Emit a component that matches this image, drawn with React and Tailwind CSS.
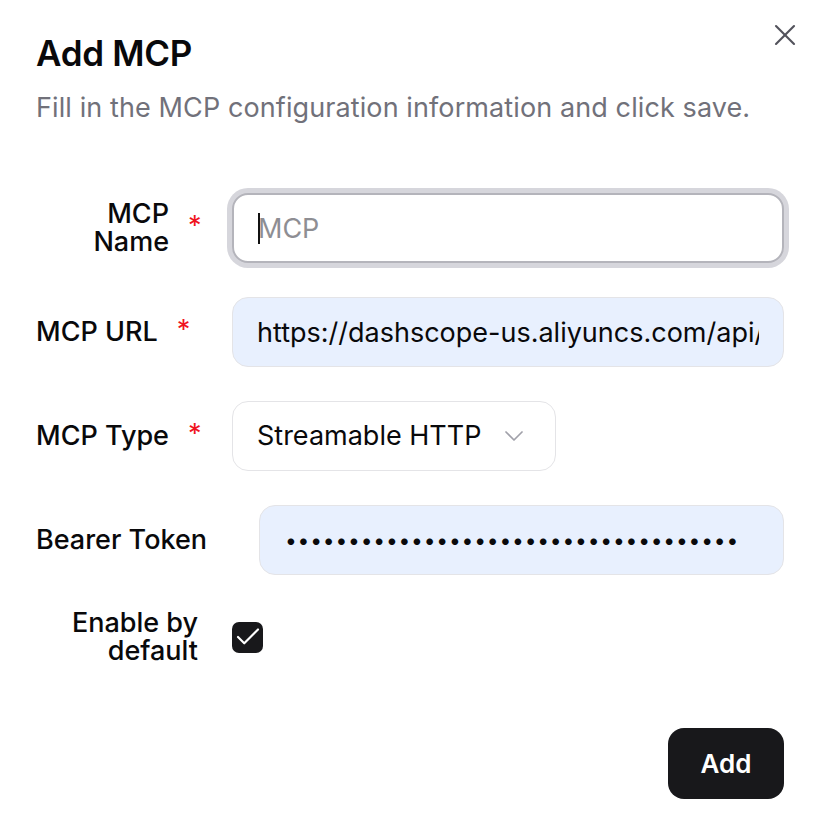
import React from "react";
import { X, Check, ChevronDown } from "lucide-react";

// red required marker next to a label
const Required = () => (
  <span className="ml-[19px] text-[27px] leading-none text-[#f0131e] -translate-y-[3px]">*</span>
);

const FormRow = ({ labelWidth = "w-[196px]", label, children }) => (
  <div className="flex items-center">
    <div className={`${labelWidth} shrink-0 flex items-center`}>{label}</div>
    {children}
  </div>
);

const inputBase =
  "h-[70px] rounded-2xl border px-[24px] text-[#09090b] outline-none";

export default function App() {
  return (
    <div className="relative min-h-screen bg-white pl-[36px] pr-[46px] font-['Inter','Liberation_Sans',sans-serif] text-[#09090b]">
      <button className="absolute right-[27px] top-[17px] text-[#52525b]" aria-label="Close">
        <X size={36} strokeWidth={1.4} />
      </button>

      <h2 className="pt-[33px] text-[35px] leading-[40px] font-semibold tracking-[-0.3px]">Add MCP</h2>
      <p className="mt-[17px] text-[27px] leading-[36px] tracking-[0.1px] text-[#71717a]">
        Fill in the MCP configuration information and click save.
      </p>

      <div className="mt-[67px] flex flex-col gap-[34px]">
        <FormRow
          label={
            <>
              <span className="w-[133px] text-right text-[27px] leading-[28px] font-medium">
                MCP
                <br />
                Name
              </span>
              <Required />
            </>
          }
        >
          <div className="relative flex-1">
            <input
              className={`${inputBase} w-full border-2 border-[#b4b4bb] bg-white text-[27px] ring-[5px] ring-[#d6d6dc] placeholder:text-[#8e8e93]`}
              placeholder="MCP"
            />
            <span className="absolute left-[26px] top-[20px] h-[31px] w-[2px] bg-[#111]" />
          </div>
        </FormRow>

        <FormRow
          label={
            <>
              <span className="text-[27px] leading-[28px] font-medium">MCP URL</span>
              <Required />
            </>
          }
        >
          <input
            className={`${inputBase} flex-1 border-[#e4e4e7] bg-[#e8f0fe] text-[27px]`}
            defaultValue="https://dashscope-us.aliyuncs.com/api/v1/mcps/WebSearch/mcp"
            readOnly
          />
        </FormRow>

        <FormRow
          label={
            <>
              <span className="text-[27px] leading-[28px] font-medium">MCP Type</span>
              <Required />
            </>
          }
        >
          <div className="flex h-[70px] w-[324px] items-center gap-[17px] rounded-2xl border border-[#e4e4e7] bg-white pl-[24px] text-[27px]">
            <span>Streamable HTTP</span>
            <ChevronDown size={32} strokeWidth={1.3} className="text-[#a1a1aa]" />
          </div>
        </FormRow>

        <FormRow
          labelWidth="w-[223px]"
          label={<span className="text-[27px] leading-[28px] font-medium">Bearer Token</span>}
        >
          <input
            type="password"
            className={`${inputBase} flex-1 border-[#e4e4e7] bg-[#e8f0fe] pl-[25px] text-[21px] tracking-[0.8px]`}
            defaultValue="sk-1234567890abcdefghijklmnopqrstuvw"
            readOnly
          />
        </FormRow>

        <FormRow
          label={
            <span className="w-[162px] text-right text-[27px] leading-[28px] font-medium">
              Enable by default
            </span>
          }
        >
          <div className="flex h-[31px] w-[31px] items-center justify-center rounded-[7px] bg-[#18181b] text-white">
            <Check size={30} strokeWidth={1.7} />
          </div>
        </FormRow>
      </div>

      <div className="mt-[63px] flex justify-end">
        <button className="h-[71px] w-[116px] rounded-2xl bg-[#18181b] text-[26px] font-semibold text-white">
          Add
        </button>
      </div>
    </div>
  );
}
